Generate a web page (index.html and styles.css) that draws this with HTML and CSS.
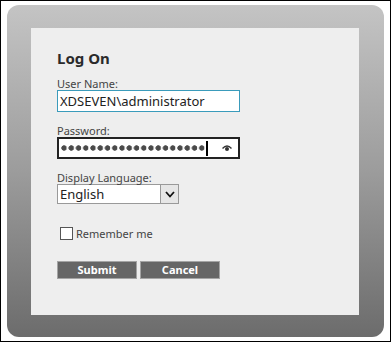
FILE: index.html
```html
<!DOCTYPE html>
<html lang="en">
<head>
    <meta charset="UTF-8">
    <title>Log On</title>
    <link rel="stylesheet" href="styles.css">
</head>
<body>
<div class="frame">
    <div class="panel">
        <div class="card">
            <h1>Log On</h1>

            <div class="field">
                <label>User Name:</label>
                <div class="box active">XDSEVEN\administrator</div>
            </div>

            <div class="field">
                <label>Password:</label>
                <div class="box pass">
                    <span class="dots" title="20 characters"></span><span class="caret"></span>
                    <svg class="eye" width="10" height="7" viewBox="0 0 10 7">
                        <path d="M0.5 3.5 Q5 -1.5 9.5 3.5" fill="none" stroke="#333" stroke-width="1.4"/>
                        <circle cx="5" cy="4" r="2" fill="#333"/>
                    </svg>
                </div>
            </div>

            <div class="field">
                <label>Display Language:</label>
                <div class="select">
                    <span class="value">English</span>
                    <span class="arrow">
                        <svg width="10" height="7" viewBox="0 0 10 7">
                            <path d="M1 1 L5 5.5 L9 1" fill="none" stroke="#111" stroke-width="1.8"/>
                        </svg>
                    </span>
                </div>
            </div>

            <div class="remember">
                <span class="check"></span>
                <span>Remember me</span>
            </div>

            <div class="buttons">
                <button>Submit</button>
                <button>Cancel</button>
            </div>
        </div>
    </div>
</div>
</body>
</html>
```

FILE: styles.css
```css
body { margin: 0; background: #fff; font-family: "Noto Sans", "Open Sans", sans-serif; color: #333; }
.frame { box-sizing: border-box; width: 391px; height: 342px; border: 1px solid #000; padding: 4px 6px 4px 6px; }
.panel { box-sizing: border-box; height: 100%; border-radius: 12px; padding: 23px 25px 22px 24px;
         background: linear-gradient(#c4c4c4, #9c9c9c 50%, #6c6c6c); }
.card { box-sizing: border-box; height: 100%; background: #eeeeee; padding: 20px 0 0 26px; }
h1 { margin: 0 0 9px 0; font-size: 15px; line-height: 20px; font-weight: bold; color: #2a2a2a; }
.field { margin-bottom: 12px; }
label { display: block; font-size: 11px; line-height: 13px; color: #444; margin-bottom: 0; }
.box { box-sizing: border-box; width: 183px; height: 22px; background: #fff; border: 1px solid #999;
       font-size: 13px; line-height: 20px; padding-left: 2px; color: #222; }
.box.active { border-color: #3a9bbb; }
.box.pass { display: flex; align-items: center; border: 2px solid #222; height: 22px; padding-left: 2px; }
.dots { width: 145px; height: 6px; background: radial-gradient(circle at 3px 3px, #4a4a4a 2.4px, transparent 3px) 0 0 / 7.25px 6px repeat-x; }
.caret { width: 1.5px; height: 15px; background: #000; margin-left: 0; }
.eye { margin-left: auto; margin-right: 6px; }
.select { box-sizing: border-box; width: 122px; height: 20px; display: flex; border: 1px solid #999; background: #fff; }
.select .value { flex: 1; font-size: 13px; line-height: 18px; padding-left: 2px; color: #222; }
.select .arrow { width: 17px; border-left: 1px solid #999; background: #e6e6e6; display: flex; align-items: center; justify-content: center; }
.remember { display: flex; align-items: center; gap: 3px; margin-top: 22px; font-size: 11px; color: #444; }
.check { box-sizing: border-box; width: 13px; height: 13px; border: 1px solid #555; background: #fff; margin-left: 3px; }
.buttons { display: flex; gap: 3px; margin-top: 20px; }
button { box-sizing: border-box; width: 80px; height: 18px; background: #666; border: 1px solid #a4a4a4; color: #fff;
         font-family: "Noto Sans", sans-serif; font-weight: bold; font-size: 11px; line-height: 14px; padding: 0; }
```
